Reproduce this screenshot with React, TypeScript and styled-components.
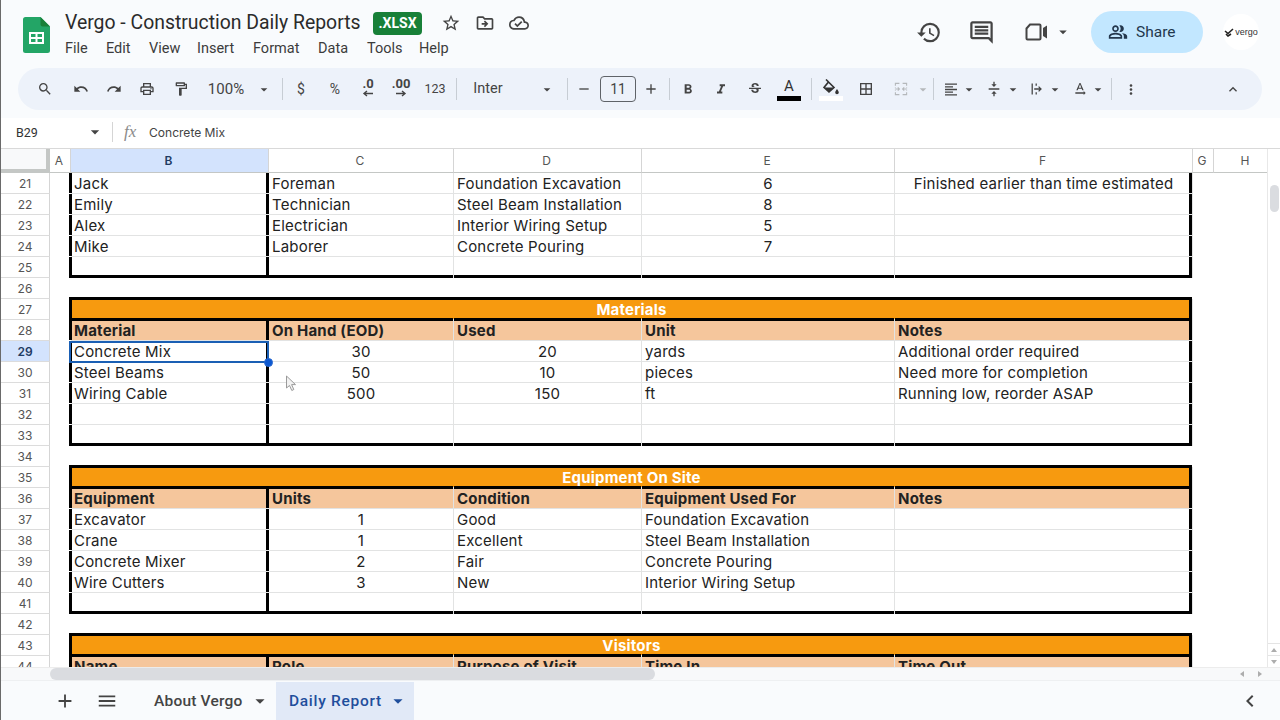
import React from "react";
import styled, { createGlobalStyle } from "styled-components";
import {
  MdSearch, MdUndo, MdRedo, MdOutlinePrint, MdOutlineFormatPaint, MdArrowDropDown, MdRemove, MdAdd,
  MdFormatBold, MdFormatItalic, MdStrikethroughS, MdBorderAll, MdFormatAlignLeft,
  MdVerticalAlignCenter, MdTextRotationNone, MdMoreVert, MdExpandLess, MdHistory, MdOutlineComment,
  MdOutlinePeopleAlt, MdStarBorder, MdOutlineDriveFileMove, MdOutlineCloudDone,
  MdMenu, MdChevronLeft,
} from "react-icons/md";

const Global = createGlobalStyle`
  html, body { margin: 0; padding: 0; height: 100%; overflow: hidden; background: #fff; }
  * { box-sizing: border-box; }
`;

const Page = styled.div`
  width: 1280px; height: 720px; display: flex; flex-direction: column; overflow: hidden;
  font-family: Roboto, "Liberation Sans", sans-serif; color: #1f1f1f; background: #fff;
  border-left: 1px solid #6a6a6a;
`;
const Header = styled.header`
  height: 118px; background: #f9fbfd; padding: 0 17px; display: flex; flex-direction: column;
`;
const TopBar = styled.div`
  height: 68px; display: flex; align-items: flex-start; margin-left: -17px;
`;
const LogoBox = styled.div`
  width: 64px; padding: 17px 0 0 22px; flex: none;
`;
const TitleArea = styled.div`
  display: flex; flex-direction: column; flex: none; width: 500px;
`;
const TitleRow = styled.div`
  display: flex; align-items: center; height: 24px; margin-top: 11px; color: #333;
`;
const DocTitle = styled.span`
  font-size: 19.4px; color: #2b2b2b; white-space: nowrap; width: 308px; margin-bottom: 2px;
`;
const Badge = styled.span`
  width: 49px; height: 23px; background: #188038; color: #fff; font-size: 14px; font-weight: 700;
  border-radius: 4px; display: flex; align-items: center; justify-content: center; margin-right: 12px;
`;
const TitleIcon = styled.span`
  width: 34px; display: flex; justify-content: center; font-size: 20px; color: #444;
`;
const Menu = styled.nav`
  display: flex; height: 26px; align-items: center; font-size: 14.5px; color: #3c3c3c;
`;
const MenuItem = styled.span<{ $w: number }>`
  width: ${(p) => p.$w}px;
`;
const TopRight = styled.div`
  margin-left: auto; display: flex; align-items: center; height: 64px; color: #444;
`;
const RightIcon = styled.span<{ $w: number }>`
  width: ${(p) => p.$w}px; display: flex; justify-content: center; align-items: center; font-size: 27px;
`;
const ShareButton = styled.div`
  width: 112px; height: 42px; border-radius: 21px; background: #c2e7ff; color: #23374d; margin-left: 19px;
  display: flex; align-items: center; padding-left: 17px; gap: 8px; font-size: 15.5px; font-weight: 400;
`;
const Avatar = styled.div`
  width: 36px; height: 36px; border-radius: 50%; background: #fff; margin: 0 4px 0 20px;
  display: flex; align-items: center; justify-content: center; gap: 1px; font-size: 9px; color: #333;
  font-family: "Liberation Sans", sans-serif;
`;

const Toolbar = styled.div`
  height: 42px; width: 1244px; border-radius: 21px; background: #edf2fa; display: flex; align-items: center;
  color: #444; flex: none;
`;
const Tool = styled.div<{ $ml: number; $size?: number; $muted?: boolean }>`
  width: 16px; height: 30px; flex: none; margin-left: ${(p) => p.$ml}px; display: flex; align-items: center;
  justify-content: center; white-space: nowrap; font-size: ${(p) => p.$size ?? 21}px;
  color: ${(p) => (p.$muted ? "#b5b8bb" : "#444")};
`;
const ToolText = styled.span<{ $size: number }>`
  font-size: ${(p) => p.$size}px; font-family: Roboto, sans-serif; line-height: 1;
`;
const Sep = styled.div`
  width: 1px; height: 22px; background: #c7cdd4; flex: none;
`;
const SizeBox = styled.div`
  width: 36px; height: 26px; border: 1px solid #5f6368; border-radius: 4px; flex: none;
  display: flex; align-items: center; justify-content: center; font-size: 14px; color: #444;
`;
const ColorTool = styled.div`
  display: flex; flex-direction: column; align-items: center; width: 24px; flex: none; padding-top: 2px;
`;
const ColorGlyph = styled.span`
  font-size: 15px; line-height: 15px; height: 17px; color: #333;
`;
const ColorBar = styled.span<{ $c: string }>`
  width: 24px; height: 5px; background: ${(p) => p.$c}; display: block;
`;
const DecBox = styled.span`
  display: inline-flex; flex-direction: column; align-items: center; font-size: 13px; font-weight: 700; line-height: 12px;
  margin-top: -3px;
`;

const FormulaBar = styled.div`
  height: 31px; background: #fff; display: flex; align-items: center; border-bottom: 1px solid #d9d9d9; color: #444;
  flex: none; padding-bottom: 2px;
`;
const NameBox = styled.span`
  width: 84px; padding-left: 15px; font-size: 12.5px; color: #333;
`;
const FxSep = styled.span`
  width: 1px; height: 20px; background: #d5d5d5; margin: 0 11px 0 7px;
`;
const Fx = styled.span`
  width: 25px; font-family: "Liberation Serif", serif; font-style: italic; font-size: 17px; color: #8a8a8a;
`;
const FormulaText = styled.span`
  font-size: 12.05px; color: #444; font-family: Inter, sans-serif;
`;

const SheetArea = styled.div`
  flex: 1; display: flex; flex-direction: column; min-height: 0;
`;
const SheetMain = styled.div`
  height: 518px; display: flex; overflow: hidden; position: relative;
`;
const Grid = styled.div`
  width: 1266px; overflow: hidden; font-family: Inter, sans-serif; color: #222; flex: none;
`;
const columns = "49px 21px 198px 185px 188px 253px 298px 21px 65px";
const Row = styled.div`
  display: grid; grid-template-columns: ${columns}; height: 21px;
`;
const ColRow = styled(Row)`
  height: 24px;
`;
const Corner = styled.div`
  background: #f8f9fa; border-right: 4px solid #c4c7c5; border-bottom: 4px solid #c4c7c5;
`;
const ColHead = styled.div<{ $active?: boolean }>`
  display: flex; align-items: center; justify-content: center; font-size: 12px; border-right: 1px solid #d5d5d5;
  padding-right: 2px;
  border-bottom: 1px solid #c4c7c5; background: ${(p) => (p.$active ? "#d3e3fd" : "#fff")};
  font-weight: ${(p) => (p.$active ? 600 : 400)}; color: ${(p) => (p.$active ? "#1f3b63" : "#555")};
`;
const RowHead = styled.div<{ $active?: boolean }>`
  display: flex; align-items: center; justify-content: center; font-size: 12px; border-right: 1px solid #d5d5d5;
  border-bottom: 1px solid #dcdcdc; background: ${(p) => (p.$active ? "#d3e3fd" : "#fff")};
  font-weight: ${(p) => (p.$active ? 600 : 400)}; color: ${(p) => (p.$active ? "#1f3b63" : "#555")};
`;
const Empty = styled.div``;
const GapFill = styled.div`
  grid-column: span 5;
`;
type CellProps = {
  $l?: boolean; $r?: boolean; $t?: boolean; $b?: boolean; $rm?: boolean; $center?: boolean; $bold?: boolean;
  $bg?: string; $span?: number; $white?: boolean;
};
const Cell = styled.div<CellProps>`
  position: relative; height: 21px; line-height: 22px; padding: 0 3px; font-size: 15px; white-space: nowrap;
  letter-spacing: 0.2px; overflow: visible;
  border-right: 1px solid #e2e3e3; border-bottom: 1px solid #e2e3e3;
  background: ${(p) => p.$bg ?? "transparent"};
  text-align: ${(p) => (p.$center ? "center" : "left")};
  font-weight: ${(p) => (p.$bold ? 700 : 400)};
  color: ${(p) => (p.$white ? "#fff" : "#222")};
  grid-column: span ${(p) => p.$span ?? 1};
  &::after {
    content: ""; position: absolute; pointer-events: none; z-index: 1;
    left: ${(p) => (p.$l ? "-2px" : "0")}; right: ${(p) => (p.$rm ? "-1px" : "0")};
    top: ${(p) => (p.$t ? "-2px" : "0")}; bottom: ${(p) => (p.$b ? "-1px" : "0")};
    border-left: ${(p) => (p.$l ? "3px solid #000" : "0")};
    border-right: ${(p) => (p.$r || p.$rm ? "3px solid #000" : "0")};
    border-top: ${(p) => (p.$t ? "3px solid #000" : "0")};
    border-bottom: ${(p) => (p.$b ? "3px solid #000" : "0")};
  }
`;
const Selection = styled.div`
  position: absolute; left: 68px; top: 192px; width: 200px; height: 22px; border: 2px solid #1a5fb4; z-index: 2;
`;
const Handle = styled.div`
  position: absolute; left: 263px; top: 209px; width: 9px; height: 9px; border-radius: 50%; background: #0b57d0;
  border: 1px solid #2a6ad0; z-index: 3;
`;
const CursorMark = styled.div`
  position: absolute; left: 284px; top: 226px; z-index: 3; line-height: 0;
`;
const VScroll = styled.div`
  flex: 1; border-left: 1px solid #e8e8e8; background: #fff; display: flex; flex-direction: column; align-items: center;
  padding-top: 36px;
`;
const VThumb = styled.div`
  width: 9px; height: 27px; border-radius: 5px; background: #dadce0;
`;
const ScrollBtn = styled.div<{ $first?: boolean }>`
  width: 100%; height: 12px; display: flex; align-items: center; justify-content: center; color: #b0b0b0;
  border-top: 1px solid #e4e4e4; margin-top: ${(p) => (p.$first ? "auto" : "0")};
`;
const HScroll = styled.div`
  height: 13px; display: flex; align-items: center; background: #f8f9fa; border-top: 1px solid #ececec; flex: none;
  padding-right: 11px;
`;
const HThumb = styled.div`
  width: 605px; height: 12px; margin-left: 49px; border-radius: 6px; background: #dadce0;
`;
const HArrow = styled.div<{ $auto?: boolean }>`
  width: 18px; display: flex; justify-content: center; color: #aaa; margin-left: ${(p) => (p.$auto ? "auto" : "0")};
`;
const TabBar = styled.div`
  flex: 1; background: #f9fbfd; display: flex; align-items: center; color: #444; font-size: 15.5px; padding-top: 1px;
  border-top: 1px solid #eef0f2;
`;
const TabIcon = styled.span<{ $ml: number }>`
  margin-left: ${(p) => p.$ml}px; display: flex; font-size: 22px; color: #444; width: 22px;
`;
const Tab = styled.div<{ $active?: boolean; $w: number; $ml?: number }>`
  width: ${(p) => p.$w}px; height: 38px; display: flex; align-items: center; padding-left: 13px; gap: 3px;
  margin-left: ${(p) => p.$ml ?? 0}px;
  background: ${(p) => (p.$active ? "#e1e9f7" : "transparent")}; color: ${(p) => (p.$active ? "#1f4e9c" : "#444")};
  font-weight: 500; letter-spacing: ${(p) => (p.$active ? "0.7px" : "0.2px")};
`;
const TabLabel = styled.span<{ $w: number }>`
  width: ${(p) => p.$w}px; white-space: nowrap;
`;
const Collapse = styled.span`
  margin-left: auto; margin-right: 18px; font-size: 24px; display: flex; color: #444;
`;

const SheetsLogo = () => (
  <svg width="27" height="36" viewBox="0 0 27 36" fill="none">
    <path d="M2.5 0H17.5L27 9.5V33.5A2.5 2.5 0 0 1 24.5 36H2.5A2.5 2.5 0 0 1 0 33.5V2.5A2.5 2.5 0 0 1 2.5 0Z" fill="#23a566" />
    <path d="M17.5 0L27 9.5H19.5A2 2 0 0 1 17.5 7.5Z" fill="#188038" />
    <path d="M6 15H21V27H6ZM8 17V20H12.5V17ZM14.5 17V20H19V17ZM8 22V25H12.5V22ZM14.5 22V25H19V22Z" fill="#fff" fillRule="evenodd" />
  </svg>
);

const VergoMark = () => (
  <svg width="10" height="9" viewBox="0 0 10 9" fill="none">
    <path d="M1 3L4 5.5L9 1M2 6L4 8L7 6" stroke="#222" strokeWidth="1.6" />
  </svg>
);

const VideoIcon = () => (
  <svg width="26" height="26" viewBox="0 0 26 26" fill="none">
    <path d="M2.5 9.5L6 5.5H15.5A1 1 0 0 1 16.5 6.5V19.5A1 1 0 0 1 15.5 20.5H3.5A1 1 0 0 1 2.5 19.5Z" stroke="#444" strokeWidth="2" />
    <path d="M19 9L23 6.5V19.5L19 17Z" fill="#444" />
  </svg>
);

const MergeIcon = () => (
  <svg width="20" height="20" viewBox="0 0 20 20" fill="none" stroke="#b5b8bb" strokeWidth="1.4">
    <path d="M8 3H3V6M3 8V9M3 11V12M3 14V17H8M12 3H17V6M17 8V9M17 11V12M17 14V17H12" />
    <path d="M3 10H8M6 8L8 10L6 12M17 10H12M14 8L12 10L14 12" />
  </svg>
);

const OverflowIcon = () => (
  <svg width="20" height="20" viewBox="0 0 20 20" fill="none" stroke="#444" strokeWidth="1.6">
    <path d="M4 3V17M9 3V6M9 9V11M9 14V17M6.5 10H15M12 7L15 10L12 13" />
  </svg>
);

const BucketIcon = () => (
  <svg width="20" height="17" viewBox="0 0 20 17" fill="none">
    <path d="M5 0.5L8 3.5M7.5 3L13 8.5L8 13L3 8.5Z" stroke="#333" strokeWidth="1.6" />
    <path d="M3.5 8.5H13L8 13Z" fill="#333" />
    <path d="M16 10C17 11.7 17.8 12.5 17.8 13.5A1.8 1.8 0 0 1 14.2 13.5C14.2 12.5 15 11.7 16 10Z" fill="#333" />
  </svg>
);

const ArrowLeft = () => (
  <svg width="12" height="7" viewBox="0 0 12 7" fill="none" stroke="#444" strokeWidth="1.4">
    <path d="M11 3.5H2M5 1L2 3.5L5 6" />
  </svg>
);

const ArrowRight = () => (
  <svg width="12" height="7" viewBox="0 0 12 7" fill="none" stroke="#444" strokeWidth="1.4">
    <path d="M1 3.5H10M7 1L10 3.5L7 6" />
  </svg>
);

const Tri = ({ dir }: { dir: "up" | "down" | "left" | "right" }) => {
  const points = { up: "1,6 4,2 7,6", down: "1,2 7,2 4,6", left: "6,1 6,7 2,4", right: "2,1 2,7 6,4" }[dir];
  return (
    <svg width="8" height="8" viewBox="0 0 8 8">
      <polygon points={points} fill="#adadad" />
    </svg>
  );
};

const CursorIcon = () => (
  <svg width="12" height="17" viewBox="0 0 12 17">
    <path d="M1.5 1V13L4.5 10.5L6.8 15.5L8.8 14.5L6.6 9.6H10.5Z" fill="#f2f2f2" stroke="#9a9a9a" strokeWidth="1" />
  </svg>
);

const dd = <MdArrowDropDown />;
const tools: [number, React.ReactNode, { size?: number; muted?: boolean }?][] = [
  [45, <MdSearch />, { size: 24 }],
  [81, <MdUndo />, { size: 22 }],
  [114, <MdRedo />, { size: 22 }],
  [147, <MdOutlinePrint />, { size: 22 }],
  [181, <MdOutlineFormatPaint />, { size: 22 }],
  [226, <ToolText $size={15}>100%</ToolText>],
  [264, dd],
  [282, <Sep />],
  [301, <ToolText $size={14}>$</ToolText>],
  [335, <ToolText $size={14}>%</ToolText>],
  [368, <DecBox>.0<ArrowLeft /></DecBox>],
  [401, <DecBox>.00<ArrowRight /></DecBox>],
  [435, <ToolText $size={12.5}>123</ToolText>],
  [456, <Sep />],
  [488, <ToolText $size={14.5}>Inter</ToolText>],
  [547, dd],
  [567, <Sep />],
  [584, <MdRemove />, { size: 18 }],
  [618, <SizeBox>11</SizeBox>],
  [651, <MdAdd />, { size: 22 }],
  [669, <Sep />],
  [688, <MdFormatBold />, { size: 25 }],
  [721, <MdFormatItalic />, { size: 25 }],
  [755, <MdStrikethroughS />, { size: 22 }],
  [789, <ColorTool><ColorGlyph>A</ColorGlyph><ColorBar $c="#000" /></ColorTool>],
  [811, <Sep />],
  [831, <ColorTool><BucketIcon /><ColorBar $c="#fff" /></ColorTool>],
  [866, <MdBorderAll />, { size: 22 }],
  [901, <MergeIcon />],
  [923, dd, { muted: true }],
  [933, <Sep />],
  [951, <MdFormatAlignLeft />, { size: 23 }],
  [969, dd],
  [994, <MdVerticalAlignCenter />, { size: 22 }],
  [1013, dd],
  [1037, <OverflowIcon />],
  [1055, dd],
  [1080, <MdTextRotationNone />, { size: 22 }],
  [1098, dd],
  [1111, <Sep />],
  [1131, <MdMoreVert />, { size: 23 }],
  [1233, <MdExpandLess />, { size: 25 }],
];

const menuItems: [string, number][] = [
  ["File", 41], ["Edit", 43], ["View", 48], ["Insert", 56], ["Format", 65], ["Data", 49], ["Tools", 52], ["Help", 40],
];

type RowSpec = {
  kind: "data" | "title" | "head" | "gap";
  cells?: string[];
  bottom?: boolean;
  center?: number[];
};

const data = (cells: string[], center: number[], bottom = false): RowSpec => ({ kind: "data", cells, center, bottom });
const team = [3, 4];
const mat = [1, 2];
const eq = [1];
const blank = ["", "", "", "", ""];

const rows: RowSpec[] = [
  data(["Jack", "Foreman", "Foundation Excavation", "6", "Finished earlier than time estimated"], team),
  data(["Emily", "Technician", "Steel Beam Installation", "8", ""], team),
  data(["Alex", "Electrician", "Interior Wiring Setup", "5", ""], team),
  data(["Mike", "Laborer", "Concrete Pouring", "7", ""], team),
  data(blank, [], true),
  { kind: "gap" },
  { kind: "title", cells: ["Materials"] },
  { kind: "head", cells: ["Material", "On Hand (EOD)", "Used", "Unit", "Notes"] },
  data(["Concrete Mix", "30", "20", "yards", "Additional order required"], mat),
  data(["Steel Beams", "50", "10", "pieces", "Need more for completion"], mat),
  data(["Wiring Cable", "500", "150", "ft", "Running low, reorder ASAP"], mat),
  data(blank, []),
  data(blank, [], true),
  { kind: "gap" },
  { kind: "title", cells: ["Equipment On Site"] },
  { kind: "head", cells: ["Equipment", "Units", "Condition", "Equipment Used For", "Notes"] },
  data(["Excavator", "1", "Good", "Foundation Excavation", ""], eq),
  data(["Crane", "1", "Excellent", "Steel Beam Installation", ""], eq),
  data(["Concrete Mixer", "2", "Fair", "Concrete Pouring", ""], eq),
  data(["Wire Cutters", "3", "New", "Interior Wiring Setup", ""], eq),
  data(blank, [], true),
  { kind: "gap" },
  { kind: "title", cells: ["Visitors"] },
  { kind: "head", cells: ["Name", "Role", "Purpose of Visit", "Time In", "Time Out"] },
];

const columnNames = ["A", "B", "C", "D", "E", "F", "G", "H"];

const SheetRow = ({ spec, n }: { spec: RowSpec; n: number }) => (
  <Row>
    <RowHead $active={n === 29}>{n}</RowHead>
    <Empty />
    {spec.kind === "gap" && <GapFill />}
    {spec.kind === "title" && (
      <Cell $span={5} $l $r $t $center $bold $white $bg="#f79a0f">
        {spec.cells![0]}
      </Cell>
    )}
    {(spec.kind === "data" || spec.kind === "head") &&
      spec.cells!.map((text, i) => (
        <Cell
          key={i}
          $l={i === 0}
          $r={i === 4}
          $rm={i === 0}
          $t={spec.kind === "head"}
          $b={spec.bottom}
          $bold={spec.kind === "head"}
          $center={spec.center?.includes(i)}
          $bg={spec.kind === "head" ? "#f5c69c" : undefined}
        >
          {text}
        </Cell>
      ))}
    <Empty />
    <Empty />
  </Row>
);

export default function App() {
  let prevRight = -1;
  const placed = tools.map(([center, node, opts], i) => {
    const ml = center - 8 - prevRight - 18;
    prevRight = center + 8 - 18;
    return (
      <Tool key={i} $ml={i === 0 ? center - 8 - 18 : ml} $size={opts?.size} $muted={opts?.muted}>
        {node}
      </Tool>
    );
  });

  return (
    <>
      <Global />
      <Page>
        <Header>
          <TopBar>
            <LogoBox>
              <SheetsLogo />
            </LogoBox>
            <TitleArea>
              <TitleRow>
                <DocTitle>Vergo - Construction Daily Reports</DocTitle>
                <Badge>.XLSX</Badge>
                <TitleIcon><MdStarBorder /></TitleIcon>
                <TitleIcon><MdOutlineDriveFileMove /></TitleIcon>
                <TitleIcon><MdOutlineCloudDone /></TitleIcon>
              </TitleRow>
              <Menu>
                {menuItems.map(([label, w]) => (
                  <MenuItem key={label} $w={w}>{label}</MenuItem>
                ))}
              </Menu>
            </TitleArea>
            <TopRight>
              <RightIcon $w={26}><MdHistory /></RightIcon>
              <RightIcon $w={78}><MdOutlineComment /></RightIcon>
              <RightIcon $w={34}><VideoIcon /></RightIcon>
              <RightIcon $w={18}><MdArrowDropDown size={22} /></RightIcon>
              <ShareButton><MdOutlinePeopleAlt size={20} />Share</ShareButton>
              <Avatar><VergoMark />vergo</Avatar>
            </TopRight>
          </TopBar>
          <Toolbar>{placed}</Toolbar>
        </Header>
        <FormulaBar>
          <NameBox>B29</NameBox>
          <MdArrowDropDown size={20} />
          <FxSep />
          <Fx>fx</Fx>
          <FormulaText>Concrete Mix</FormulaText>
        </FormulaBar>
        <SheetArea>
          <SheetMain>
            <Grid>
              <ColRow>
                <Corner />
                {columnNames.map((c) => (
                  <ColHead key={c} $active={c === "B"}>{c}</ColHead>
                ))}
              </ColRow>
              {rows.map((spec, i) => (
                <SheetRow key={i} spec={spec} n={21 + i} />
              ))}
            </Grid>
            <Selection />
            <Handle />
            <CursorMark><CursorIcon /></CursorMark>
            <VScroll>
              <VThumb />
              <ScrollBtn $first><Tri dir="up" /></ScrollBtn>
              <ScrollBtn><Tri dir="down" /></ScrollBtn>
            </VScroll>
          </SheetMain>
          <HScroll>
            <HThumb />
            <HArrow $auto><Tri dir="left" /></HArrow>
            <HArrow><Tri dir="right" /></HArrow>
          </HScroll>
          <TabBar>
            <TabIcon $ml={53}><MdAdd /></TabIcon>
            <TabIcon $ml={20}><MdMenu /></TabIcon>
            <Tab $w={135} $ml={23}>
              <TabLabel $w={92}>About Vergo</TabLabel>
              <MdArrowDropDown size={22} />
            </Tab>
            <Tab $active $w={138}>
              <TabLabel $w={95}>Daily Report</TabLabel>
              <MdArrowDropDown size={22} />
            </Tab>
            <Collapse><MdChevronLeft /></Collapse>
          </TabBar>
        </SheetArea>
      </Page>
    </>
  );
}
